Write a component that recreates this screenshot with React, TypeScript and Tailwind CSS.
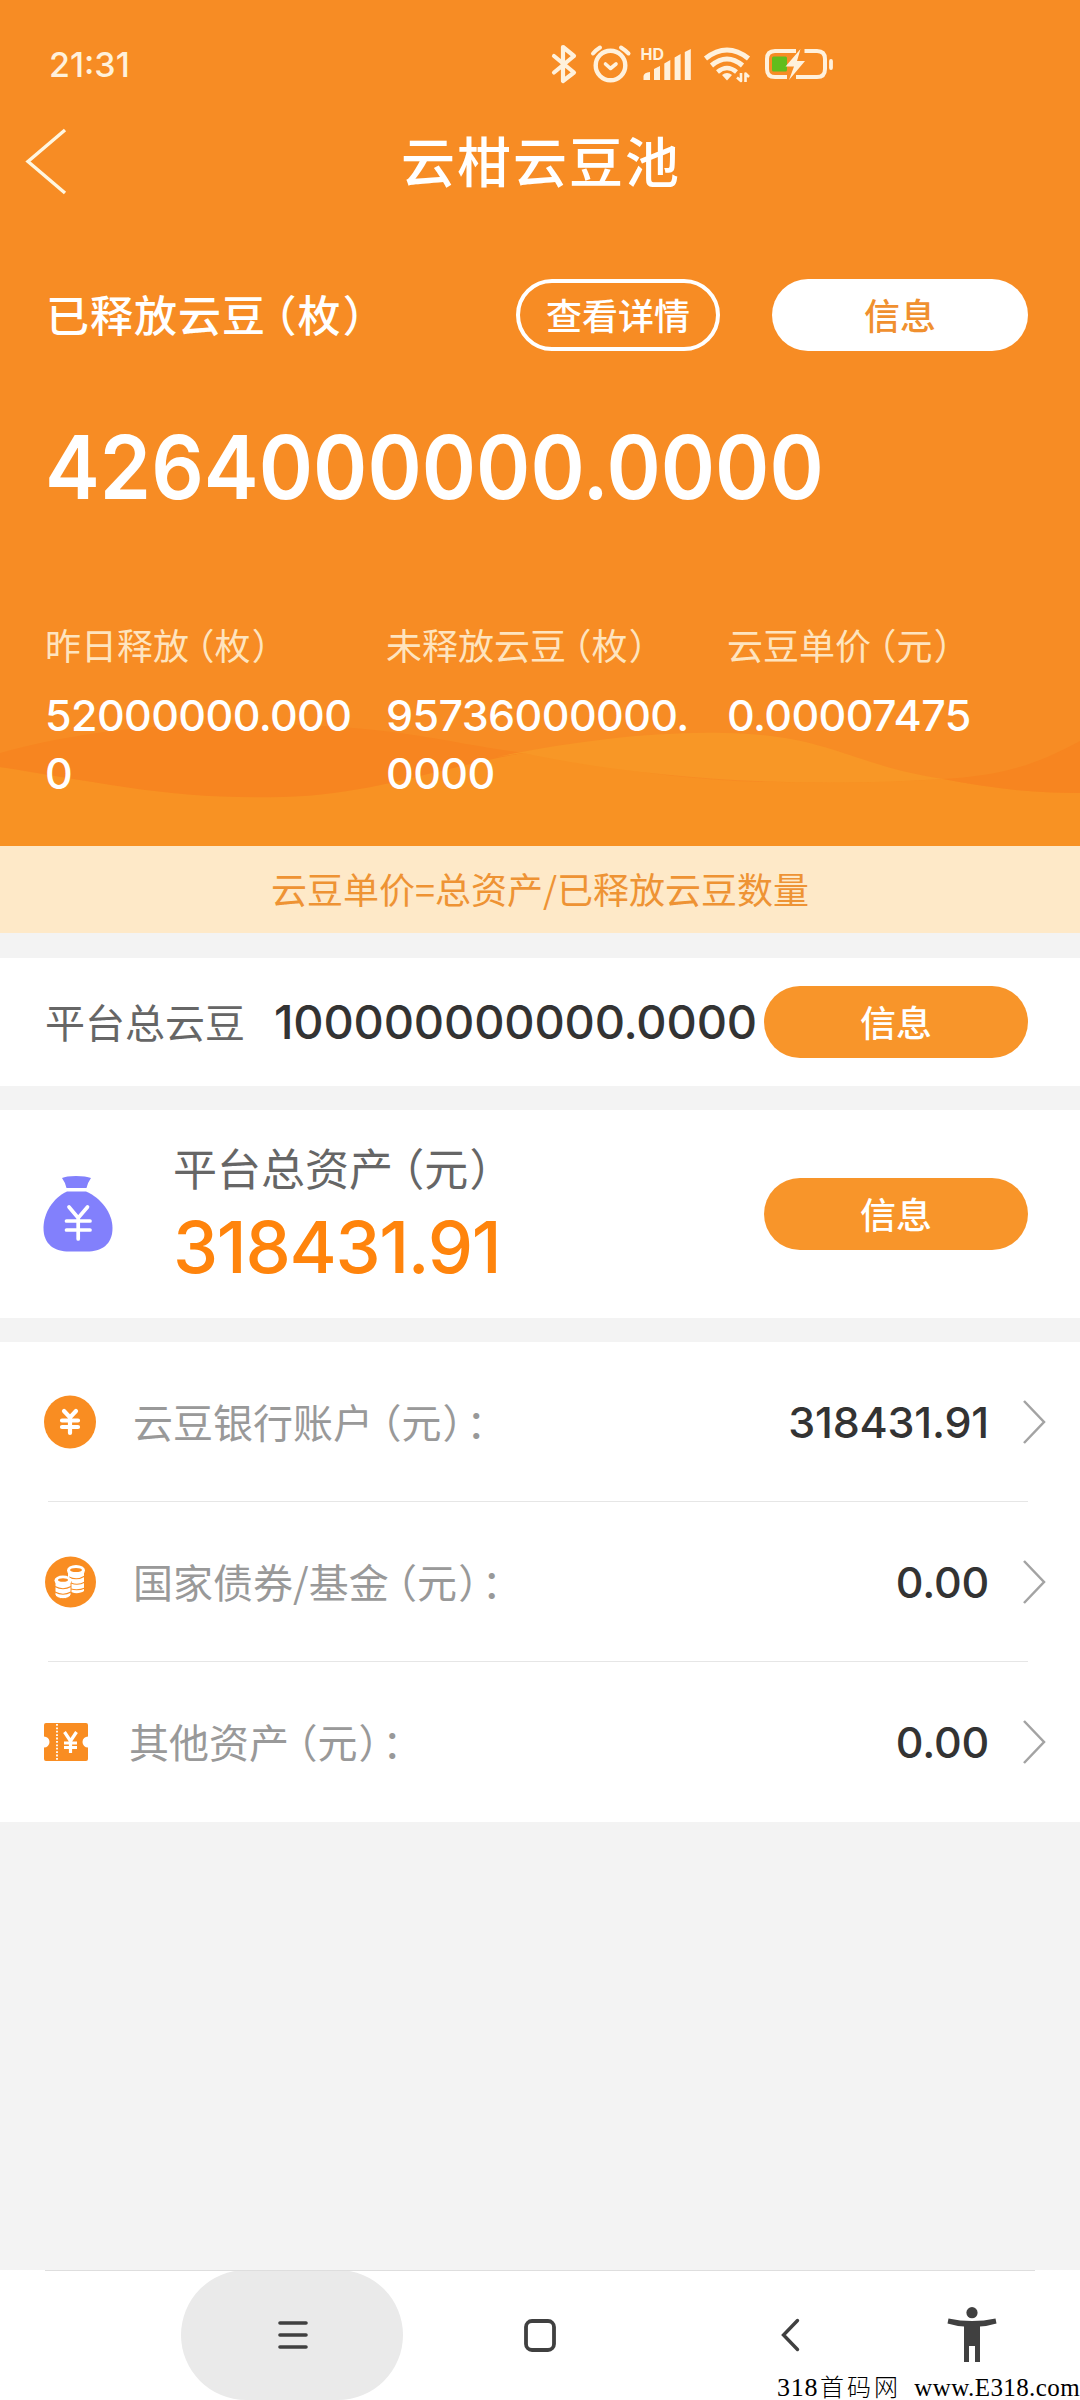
import React from "react";

const cjk = "font-['Noto_Sans_CJK_SC',sans-serif]";
const num = "font-['Inter','Noto_Sans_CJK_SC',sans-serif]";

function Unit({ text }: { text: string }) {
  return (
    <>
      <span className="ml-[0.21em] [font-feature-settings:'halt']">（</span>
      {text}
      <span className="ml-[0.03em] [font-feature-settings:'halt']">）</span>
    </>
  );
}

function StatusBar() {
  return (
    <div className="flex h-[96px] items-start">
      <span className={`${num} ml-[49px] mt-[43px] w-[85px] text-[34px] leading-[44px] font-medium text-[#fff1dc]`}>21:31</span>
      <svg className="ml-[406px] mt-[36px]" width="300" height="56" viewBox="540 36 300 56" fill="none" stroke="#fff1dc" strokeWidth="4" strokeLinecap="round" strokeLinejoin="round">
        <path d="M554 56 L574 72.500 L563 81 V47 L574 56 L554 72.500" strokeWidth="4.200" />
        <circle cx="610.500" cy="65.500" r="14.800" strokeWidth="4.400" />
        <path d="M605.500 64 L610.500 68.500 L616 64" strokeWidth="3.600" />
        <path d="M593 53.500 Q596 50 600 47.500" strokeWidth="4" />
        <path d="M621 47.500 Q625 50 628.500 53.500" strokeWidth="4" />
        <g fill="#fff1dc" stroke="none">
          <path d="M643.500 80 V76 Q644 72.500 650 72 V80Z" />
          <path d="M654 80 V69 L660 66 V80Z" />
          <path d="M664.300 80 V63.500 L670.300 60 V80Z" />
          <path d="M674.600 80 V57.500 L680.600 54 V80Z" />
          <path d="M684.800 80 V52 L690.800 49 V80Z" />
          <path d="M722 75 Q727 71 732 75 L727 80.500Z" />
        </g>
        <path d="M705.500 58.500 Q727 41.500 748.500 58.500" strokeWidth="5" strokeLinecap="butt" />
        <path d="M711.500 65.500 Q727 52.500 742.500 65.500" strokeWidth="5" strokeLinecap="butt" />
        <path d="M717.500 72 Q727 64 736.500 72" strokeWidth="4.500" strokeLinecap="butt" />
        <path d="M741 73 V81 L737 77.500 M745.500 82 V73.500 L749 77" strokeWidth="2.600" strokeLinecap="butt" />
        <rect x="772" y="56.500" width="15" height="15" rx="1.500" fill="#62bd1c" stroke="none" />
        <path d="M796 51 H775 Q767 51 767 59 V69 Q767 77 775 77 H787 M804.500 51 H817 Q825 51 825 59 V69 Q825 77 817 77 H796" strokeLinecap="butt" />
        <path d="M831 61 V68" strokeWidth="3.800" />
        <path d="M800.500 49 L785.500 66.500 H794 L789 80 L805 61 H797Z" fill="#fff1dc" stroke="none" />
        <text x="640.500" y="60" className="font-['Inter',sans-serif]" fontSize="16" fontWeight="700" fill="#fff1dc" stroke="none">HD</text>
      </svg>
    </div>
  );
}

function Waves() {
  return (
    <svg className="absolute bottom-0 left-0" width="1080" height="130" viewBox="0 716 1080 130" fill="none">
      <path d="M0 767 C100 784 190 798 282 797 C350 788 400 770 496 755 L523 753 C610 768 690 782 778 782 C840 783 900 782 943 779 C990 788 1030 793 1080 793 V846 H0Z" fill="#f89223" />
      <path d="M0 753 C110 722 240 718 365 729 C420 734 460 744 523 753 C430 770 370 795 282 797 C170 800 100 782 0 767Z" fill="#f78520" />
      <path d="M496 757 C570 742 650 731 725 733 C830 735 850 765 943 779 C800 788 650 780 523 753Z" fill="#f89726" />
      <path d="M943 779 C1010 775 1040 762 1080 741 V793 C1030 793 990 788 943 779Z" fill="#f78520" />
    </svg>
  );
}

function Stat({ label, unit, value }: { label: string; unit: string; value: string }) {
  return (
    <div className="w-[341px]">
      <div className="h-[52px] whitespace-nowrap text-[36px] leading-[52px] text-[#fee4bf]">
        {label}
        <Unit text={unit} />
      </div>
      <div className={`${num} mt-[16px] w-[315px] text-[43px] leading-[58px] font-medium tracking-[-0.6px] break-all text-white`}>{value}</div>
    </div>
  );
}

function InfoButton() {
  return <button className="flex h-[72px] w-[264px] shrink-0 items-center justify-center rounded-full bg-[#f8952a] pb-[3px] text-[36px] font-medium text-white">信息</button>;
}

function Chevron() {
  return (
    <svg className="ml-[32px]" width="26" height="48" viewBox="0 0 26 48" fill="none" stroke="#a3a3a3" strokeWidth="2.500">
      <path d="M3 3 L23 24 L3 45" />
    </svg>
  );
}

function MoneyBag() {
  return (
    <svg width="70" height="78" viewBox="0 0 70 78">
      <path d="M19 3 Q23 1 33 1 Q43 1 48 3 Q45 7 43.500 13 H23.500 Q22 7 19 3Z" fill="#8280fc" />
      <path d="M24 16.500 H43 C58 23 69.500 38 69.500 53 C69.500 70 58 76.500 44 76.500 H26 C12 76.500 0.500 70 0.500 53 C0.500 38 10 23 24 16.500Z" fill="#8280fc" />
      <path d="M26 32 L35.200 43 L44.500 32 M35.200 43 V64 M23.500 46 H47 M23.500 55 H47" stroke="#fff" strokeWidth="3.700" fill="none" strokeLinecap="round" />
    </svg>
  );
}

function YuanIcon() {
  return (
    <svg width="52" height="54" viewBox="0 0 52 54">
      <ellipse cx="26" cy="27" rx="26" ry="26.500" fill="#f98d22" />
      <path d="M20 16 L26 22.500 L32 16 M26 22 V38 M18 25.500 H34 M18 32 H34" stroke="#fff" strokeWidth="4.200" fill="none" strokeLinecap="round" />
    </svg>
  );
}

function CoinsIcon() {
  return (
    <svg width="52" height="52" viewBox="0 0 52 52">
      <circle cx="26.500" cy="26" r="25.500" fill="#f98d22" />
      <path d="M24 15 V34 C28 38 36 38 40 35 V15Z" fill="#fff" />
      <ellipse cx="32" cy="14.500" rx="9" ry="5.500" fill="#fff" />
      <ellipse cx="32" cy="14" rx="6" ry="2" fill="#f98d22" />
      <path d="M25 21 Q33 25 41 20 M27 27 Q34 30 41 26 M27 33 Q34 35 41 32" stroke="#f98d22" strokeWidth="1.100" fill="none" />
      <path d="M11 25 V39 C14 44 24 44 27 39 V25Z" fill="#fff" stroke="#f98d22" strokeWidth="1" />
      <ellipse cx="19" cy="24.500" rx="8.500" ry="5" fill="#fff" />
      <ellipse cx="19" cy="24" rx="5" ry="1.800" fill="#f98d22" />
      <path d="M11 30.500 Q19 35 27 30.500 M11 36 Q19 40.500 27 36" stroke="#f98d22" strokeWidth="1.200" fill="none" />
    </svg>
  );
}

function TicketIcon() {
  return (
    <svg width="44" height="40" viewBox="0 0 44 40">
      <path d="M2 1 H42 Q44 1 44 3 V14.500 A5.500 5.500 0 0 0 44 25.500 V37 Q44 39 42 39 H2 Q0 39 0 37 V25.500 A5.500 5.500 0 0 0 0 14.500 V3 Q0 1 2 1Z" fill="#f98d22" />
      <path d="M13 2 V39" stroke="#fff" strokeWidth="1.800" strokeDasharray="1.800 1.600" />
      <path d="M20.500 10 L26.500 19 L32.500 10 M26.500 19 V31 M20 21 H33 M20 25.500 H33" stroke="#fff" strokeWidth="3.200" fill="none" />
    </svg>
  );
}

function AccountRow({ icon, label, value, last, gap }: { icon: React.ReactNode; label: string; value: string; last?: boolean; gap: string }) {
  return (
    <div className="relative flex h-[160px] items-center pr-[33px] pl-[44px]">
      {icon}
      <span className={`${gap} pb-[3px] text-[40px] text-[#999]`}>
        {label}
        <Unit text="元" />
        <span className="ml-[0.09em]">：</span>
      </span>
      <span className={`${num} ml-auto text-[43px] font-medium tracking-[-0.2px] text-[#333]`}>{value}</span>
      <Chevron />
      {!last && <div className="absolute right-[52px] bottom-0 left-[48px] h-px bg-[#e6e6e6]" />}
    </div>
  );
}

function NavBar() {
  return (
    <nav className="relative flex h-[130px] bg-white">
      <div className="absolute top-0 right-[45px] left-[45px] h-px bg-[#dedede]" />
      <div className="ml-[181px] flex h-[130px] w-[222px] items-center justify-center rounded-[65px] bg-[#eaeaea]">
        <svg className="ml-[2px]" width="32" height="30" viewBox="0 0 32 30" stroke="#404040" strokeWidth="3.600" strokeLinecap="round">
          <path d="M3 3 H29 M3 15 H29 M3 27 H29" />
        </svg>
      </div>
      <svg className="ml-[121px] mt-[49px]" width="32" height="33" viewBox="0 0 32 33" fill="none">
        <rect x="2" y="2" width="28" height="29" rx="6" stroke="#404040" strokeWidth="3.800" />
      </svg>
      <svg className="ml-[224px] mt-[48px]" width="22" height="36" viewBox="0 0 22 36" fill="none" stroke="#404040" strokeWidth="3.400" strokeLinecap="round">
        <path d="M17.500 2.500 L3.500 17 L17.500 31.500" />
      </svg>
      <svg className="ml-[145px] mt-[36px]" width="50" height="58" viewBox="0 0 50 58" fill="#404040">
        <circle cx="25" cy="6.700" r="5.600" />
        <path d="M1.500 12.500 Q25 17.500 48.500 12.500 L49.500 17.500 Q41 20 33 20.500 V56 H28 V40 H22 V56 H17 V20.500 Q9 20 0.500 17.500Z" />
      </svg>
      <div className="absolute right-0 bottom-[-1px] flex w-[303px] items-baseline text-[26px] leading-[26px] whitespace-nowrap text-black">
        <span className="font-['Liberation_Serif',serif] tracking-[0.7px]">318</span>
        <span className="ml-[2px] text-[24px] leading-[20px] font-light tracking-[3px]">首码网</span>
        <span className="ml-auto font-['Liberation_Serif',serif] text-[25px] tracking-[0.4px]">www.E318.com</span>
      </div>
    </nav>
  );
}

export default function App() {
  return (
    <div className={`${cjk} flex h-[2400px] w-[1080px] flex-col overflow-hidden bg-[#f3f3f3]`}>
      <header className="relative h-[846px] bg-[#f78c24]">
        <Waves />
        <div className="relative">
          <StatusBar />
          <div className="relative flex h-[134px] items-center justify-center pb-[6px]">
            <svg className="absolute top-[31px] left-[24px]" width="44" height="70" viewBox="0 0 44 70" fill="none" stroke="#fff6e0" strokeWidth="3.400">
              <path d="M41 3 L4 34.500 L41 66" />
            </svg>
            <h1 className="pl-[2px] text-[54px] leading-[80px] font-medium tracking-[2px] text-white">云柑云豆池</h1>
          </div>
          <div className="mt-[49px] flex h-[72px] items-center pr-[52px] pl-[46px]">
            <span className="pb-[4px] text-[43px] font-medium tracking-[1px] whitespace-nowrap text-white">
              已释放云豆
              <Unit text="枚" />
            </span>
            <button className="ml-auto flex h-[72px] w-[204px] items-center justify-center rounded-full border-4 border-white pb-[3px] text-[36px] font-medium text-white">查看详情</button>
            <button className="ml-[52px] flex h-[72px] w-[256px] items-center justify-center rounded-full bg-white pb-[3px] text-[36px] font-medium text-[#f0902f]">信息</button>
          </div>
          <div className={`${num} mt-[56px] ml-[45px] origin-left scale-x-[0.936] text-[88px] leading-[120px] font-semibold whitespace-nowrap text-white`}>4264000000.0000</div>
          <div className="mt-[91px] flex pl-[45px]">
            <Stat label="昨日释放" unit="枚" value="52000000.0000" />
            <Stat label="未释放云豆" unit="枚" value="95736000000.0000" />
            <Stat label="云豆单价" unit="元" value="0.00007475" />
          </div>
        </div>
      </header>
      <div className="flex h-[87px] items-center justify-center bg-[#fee9c8] pb-[3px] text-[36px] text-[#ee9334]">云豆单价=总资产/已释放云豆数量</div>
      <section className="mt-[25px] flex h-[128px] items-center bg-white pr-[52px] pl-[45px]">
        <span className="w-[229px] shrink-0 pb-[3px] text-[40px] text-[#666]">平台总云豆</span>
        <span className={`${num} w-[490px] shrink-0 text-[47px] font-medium tracking-[-0.2px] text-[#333]`}>100000000000.0000</span>
        <InfoButton />
      </section>
      <section className="mt-[24px] flex h-[208px] items-center bg-white pr-[52px] pl-[43px]">
        <MoneyBag />
        <div className="ml-[60px] flex-1">
          <div className="text-[44px] leading-[58px] text-[#666]">
            平台总资产
            <Unit text="元" />
          </div>
          <div className={`${num} mt-[7px] text-[72px] leading-[88px] font-medium tracking-[-1.3px] text-[#ff840c]`}>318431.91</div>
        </div>
        <InfoButton />
      </section>
      <section className="mt-[24px] bg-white">
        <AccountRow icon={<YuanIcon />} gap="ml-[37px]" label="云豆银行账户" value="318431.91" />
        <AccountRow icon={<CoinsIcon />} gap="ml-[37px]" label="国家债券/基金" value="0.00" />
        <AccountRow icon={<TicketIcon />} gap="ml-[41px]" label="其他资产" value="0.00" last />
      </section>
      <div className="flex-1" />
      <NavBar />
    </div>
  );
}
